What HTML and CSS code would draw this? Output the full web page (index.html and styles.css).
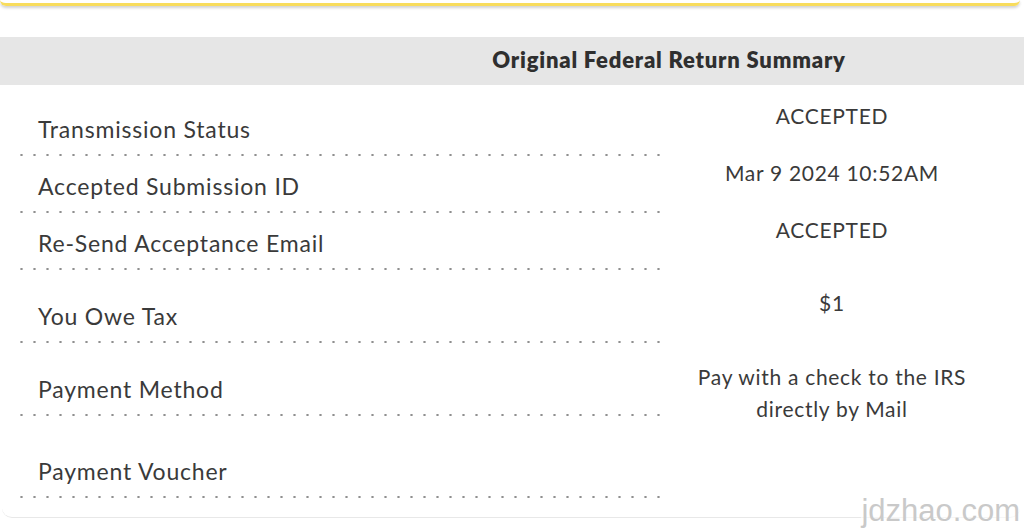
FILE: index.html
```html
<!DOCTYPE html>
<html>
<head>
<meta charset="utf-8">
<link rel="stylesheet" href="styles.css">
</head>
<body>
<div class="top-card"></div>
<section class="summary">
  <div class="summary-head"><h2 class="summary-title">Original Federal Return Summary</h2></div>
  <div class="rows">
    <div class="row">
      <div class="label">Transmission Status</div>
      <div class="value">ACCEPTED</div>
    </div>
    <div class="row">
      <div class="label">Accepted Submission ID</div>
      <div class="value">Mar 9 2024 10:52AM</div>
    </div>
    <div class="row">
      <div class="label">Re-Send Acceptance Email</div>
      <div class="value">ACCEPTED</div>
    </div>
    <div class="row row-tall">
      <div class="label">You Owe Tax</div>
      <div class="value value-low">$1</div>
    </div>
    <div class="row row-mid">
      <div class="label">Payment Method</div>
      <div class="value value-low">Pay with a check to the IRS<br>directly by Mail</div>
    </div>
    <div class="row row-last">
      <div class="label">Payment Voucher</div>
      <div class="value"></div>
    </div>
  </div>
</section>
<div class="watermark">jdzhao.com</div>
</body>
</html>
```
FILE: styles.css
```css
html, body {
  margin: 0;
  padding: 0;
  background: #ffffff;
  overflow: hidden;
  height: 528px;
}
body {
  font-family: Lato, "Noto Sans", sans-serif;
  color: #3b3b3b;
  position: relative;
}
.top-card {
  height: 3px;
  margin-right: 4px;
  border-bottom: 3px solid #f8dc5c;
  border-radius: 0 0 8px 8px;
  box-shadow: 0 2px 3px rgba(0,0,0,0.18);
}
.summary {
  margin-top: 31px;
  margin-left: 2px;
  margin-right: 4px;
  border-bottom: 1px solid #e8e8e8;
  border-radius: 0 0 10px 10px;
  height: 481px;
  box-sizing: border-box;
}
.summary-head {
  margin-left: -2px;
  margin-right: -4px;
  height: 48px;
  box-sizing: border-box;
  padding-bottom: 4px;
  background: #e6e6e6;
  display: flex;
  align-items: center;
  justify-content: center;
  padding-left: 314px;
}
.summary-title {
  margin: 0;
  font-size: 22px;
  font-weight: 800;
  color: #2f2f2f;
  letter-spacing: 0.8px;
}
.rows {
  padding-top: 15px;
  padding-left: 18px;
}
.row {
  display: grid;
  grid-template-columns: 642px 340px;
  grid-template-rows: minmax(0, 1fr);
  height: 57px;
}
.row-tall { height: 73px; }
.row-mid { height: 73px; }
.row-last { height: 82px; }
.label {
  display: flex;
  align-items: flex-end;
  padding-left: 18px;
  padding-bottom: 15px;
  font-size: 23px;
  line-height: 26px;
  letter-spacing: 0.8px;
  color: #3a3a3a;
  background-image: radial-gradient(circle, #8f8f8f 1px, transparent 1.3px);
  background-size: 13px 4px;
  background-position: -5px 100%;
  background-repeat: repeat-x;
}
.value {
  text-align: center;
  padding-top: 0;
  font-size: 21px;
  line-height: 32px;
  letter-spacing: 0.7px;
  color: #3a3a3a;
}
.value-low { padding-top: 16px; }
.row-mid .value-low { padding-top: 17px; }
.watermark {
  position: absolute;
  right: 4px;
  bottom: -1px;
  font-family: "Liberation Sans", Arial, sans-serif;
  font-size: 31px;
  color: #c9c9c9;
  background: rgba(255,255,255,0.6);
}
```
